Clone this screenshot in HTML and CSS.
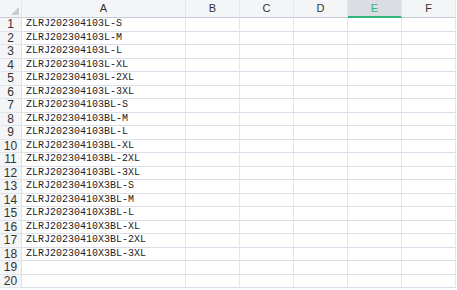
FILE: index.html
```html
<!DOCTYPE html>
<html lang="en">
<head>
    <meta charset="UTF-8">
    <title>Sheet</title>
    <link rel="stylesheet" href="styles.css">
</head>
<body>
    <div class="sheet" id="sheet">
        <div class="corner"><span class="tri"></span></div>
        <div class="colhead">A</div>
        <div class="colhead">B</div>
        <div class="colhead">C</div>
        <div class="colhead">D</div>
        <div class="colhead active">E</div>
        <div class="colhead">F</div>
    </div>

    <script>
        const values = [
            "ZLRJ202304103L-S", "ZLRJ202304103L-M", "ZLRJ202304103L-L",
            "ZLRJ202304103L-XL", "ZLRJ202304103L-2XL", "ZLRJ202304103L-3XL",
            "ZLRJ202304103BL-S", "ZLRJ202304103BL-M", "ZLRJ202304103BL-L",
            "ZLRJ202304103BL-XL", "ZLRJ202304103BL-2XL", "ZLRJ202304103BL-3XL",
            "ZLRJ20230410X3BL-S", "ZLRJ20230410X3BL-M", "ZLRJ20230410X3BL-L",
            "ZLRJ20230410X3BL-XL", "ZLRJ20230410X3BL-2XL", "ZLRJ20230410X3BL-3XL",
            "", ""
        ];
        const sheet = document.getElementById('sheet');

        values.forEach((v, i) => {
            const num = document.createElement('div');
            num.className = 'rowhead';
            num.textContent = i + 1;
            sheet.appendChild(num);

            for (let c = 0; c < 6; c++) {
                const cell = document.createElement('div');
                cell.className = 'cell';
                if (c === 0) cell.textContent = v;
                sheet.appendChild(cell);
            }
        });
    </script>
</body>
</html>
```

FILE: styles.css
```css
body {
    margin: 0;
    background-color: #ffffff;
    overflow: hidden;
}

.sheet {
    display: grid;
    grid-template-columns: 22px 164px 54px 54px 54px 54px 54px;
    grid-template-rows: 18px;
    grid-auto-rows: 14px 13px;
}

.corner,
.colhead {
    background-color: #f4f5f7;
    border-right: 1px solid #e4e6ed;
    border-bottom: 1px solid #c6ccda;
    box-sizing: border-box;
}

.corner {
    position: relative;
}

.tri {
    position: absolute;
    right: 2px;
    bottom: 2px;
    width: 0;
    height: 0;
    border-left: 8px solid transparent;
    border-bottom: 8px solid #c9cbd0;
}

.colhead {
    font-family: "Liberation Sans", Arial, sans-serif;
    font-size: 11px;
    color: #333;
    text-align: center;
    line-height: 17px;
}

.colhead.active {
    background-color: #dbdde3;
    color: #2fb67c;
    border-bottom: 2px solid #2fb67c;
}

.rowhead {
    background-color: #f4f5f7;
    border-right: 1px solid #dcdfe8;
    border-bottom: 1px solid #e2e4ec;
    box-sizing: border-box;
    font-family: "Liberation Sans", Arial, sans-serif;
    font-size: 12px;
    color: #333;
    text-align: center;
    line-height: 13px;
    overflow: hidden;
}

.cell {
    border-right: 1px solid #e2e4ee;
    border-bottom: 1px solid #dcdfe9;
    box-sizing: border-box;
    font-family: "Liberation Mono", "Courier New", monospace;
    font-size: 10px;
    color: #222;
    line-height: 12px;
    padding-left: 4px;
    white-space: nowrap;
    overflow: hidden;
}
```
